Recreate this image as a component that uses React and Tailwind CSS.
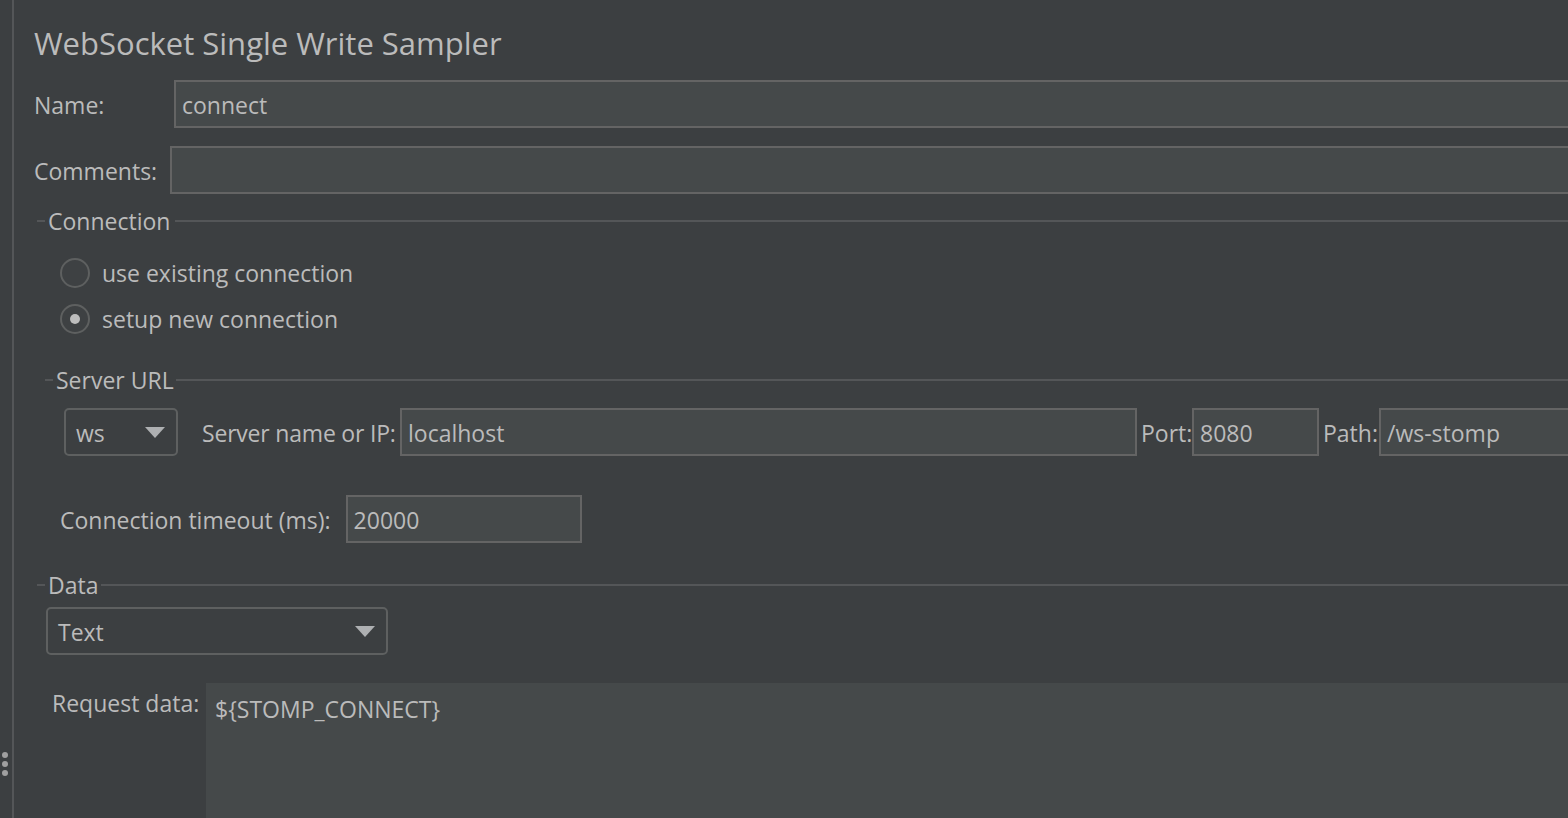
import React from 'react'

const FONT = { fontFamily: '"Open Sans", "Noto Sans", sans-serif' }

function Caret() {
  return (
    <svg width="20" height="11" viewBox="0 0 20 11" className="shrink-0">
      <path d="M0 0 L20 0 L10 11 Z" fill="#aeb0b2" />
    </svg>
  )
}

function Field({ value = '', className = '' }) {
  return (
    <div className={`h-[48px] border-2 border-[#646464] bg-[#45494a] flex items-center px-[6px] pt-[2px] text-[23px] text-[#bbbbbb] ${className}`}>
      {value}
    </div>
  )
}

function Combo({ value, className = '' }) {
  return (
    <div className={`h-[48px] border-2 border-[#5e6060] rounded-[5px] flex items-center justify-between pl-[10px] pr-[11px] text-[23px] ${className}`}>
      <span className="pt-[2px]">{value}</span>
      <Caret />
    </div>
  )
}

function GroupTitle({ title, line = 'ml-[4px]' }) {
  return (
    <div className="flex items-center h-[30px]">
      <div className="w-[8px] h-[2px] bg-[#545658]" />
      <span className="ml-[3px] text-[23px] leading-[30px]">{title}</span>
      <div className={`flex-1 h-[2px] bg-[#545658] ${line}`} />
    </div>
  )
}

function Radio({ label, checked }) {
  return (
    <div className="flex items-center h-[46px]">
      <div className="w-[30px] h-[30px] rounded-full border-2 border-[#5e6060] bg-[#3e4143] flex items-center justify-center">
        {checked && <div className="w-[10px] h-[10px] rounded-full bg-[#bdbdbd]" />}
      </div>
      <span className="ml-[12px] text-[23px]">{label}</span>
    </div>
  )
}

export default function App() {
  return (
    <div style={FONT} className="w-[1568px] h-[818px] overflow-hidden bg-[#3c3f41] text-[#bbbbbb] flex">
      {/* splitter */}
      <div className="w-[12px] relative shrink-0">
        <div className="absolute left-[2px] top-[752px] flex flex-col gap-[3px]">
          <div className="w-[6px] h-[6px] rounded-full bg-[#a0a0a0]" />
          <div className="w-[6px] h-[6px] rounded-full bg-[#a0a0a0]" />
          <div className="w-[6px] h-[6px] rounded-full bg-[#a0a0a0]" />
        </div>
      </div>
      <div className="w-[2px] bg-[#545658] shrink-0" />

      <div className="min-w-[1640px] pl-[20px] pt-[23px]">
        <h1 className="text-[31px] leading-[40px] font-normal">WebSocket Single Write Sampler</h1>

        <div className="flex items-center mt-[17px]">
          <span className="w-[140px] pt-[2px] text-[23px]">Name:</span>
          <Field value="connect" className="flex-1" />
        </div>
        <div className="flex items-center mt-[18px]">
          <span className="w-[136px] pt-[2px] text-[23px]">Comments:</span>
          <Field className="flex-1" />
        </div>

        {/* Connection */}
        <div className="mt-[12px] pl-[3px]">
          <GroupTitle title="Connection" line="ml-[5px]" />
          <div className="pl-[23px] mt-[14px]">
            <Radio label="use existing connection" />
            <Radio label="setup new connection" checked />
          </div>

          {/* Server URL */}
          <div className="mt-[23px] pl-[8px]">
            <GroupTitle title="Server URL" line="ml-[2px]" />
            <div className="flex items-center mt-[13px] pl-[19px]">
              <Combo value="ws" className="w-[114px]" />
              <span className="ml-[24px] w-[198px] pt-[3px] whitespace-nowrap text-[23px] tracking-[-0.2px]">Server name or IP:</span>
              <Field value="localhost" className="w-[737px]" />
              <span className="ml-[4px] w-[51px] pt-[3px] text-[23px]">Port:</span>
              <Field value="8080" className="w-[127px]" />
              <span className="ml-[4px] w-[56px] pt-[3px] text-[23px]">Path:</span>
              <Field value="/ws-stomp" className="flex-1" />
            </div>
          </div>

          <div className="flex items-center mt-[39px] pl-[23px]">
            <span className="pt-[2px] text-[23px]">Connection timeout (ms):</span>
            <Field value="20000" className="w-[236px] ml-[15px]" />
          </div>
        </div>

        {/* Data */}
        <div className="mt-[27px] pl-[3px]">
          <GroupTitle title="Data" line="ml-[3px]" />
          <div className="mt-[7px] pl-[9px]">
            <Combo value="Text" className="w-[342px]" />
          </div>
          <div className="flex mt-[28px] pl-[15px]">
            <span className="w-[154px] text-[23px] pt-[3px]">Request data:</span>
            <div className="flex-1 h-[140px] bg-[#45494a] pl-[9px] pt-[9px] text-[23px]">{'${STOMP_CONNECT}'}</div>
          </div>
        </div>
      </div>
    </div>
  )
}
